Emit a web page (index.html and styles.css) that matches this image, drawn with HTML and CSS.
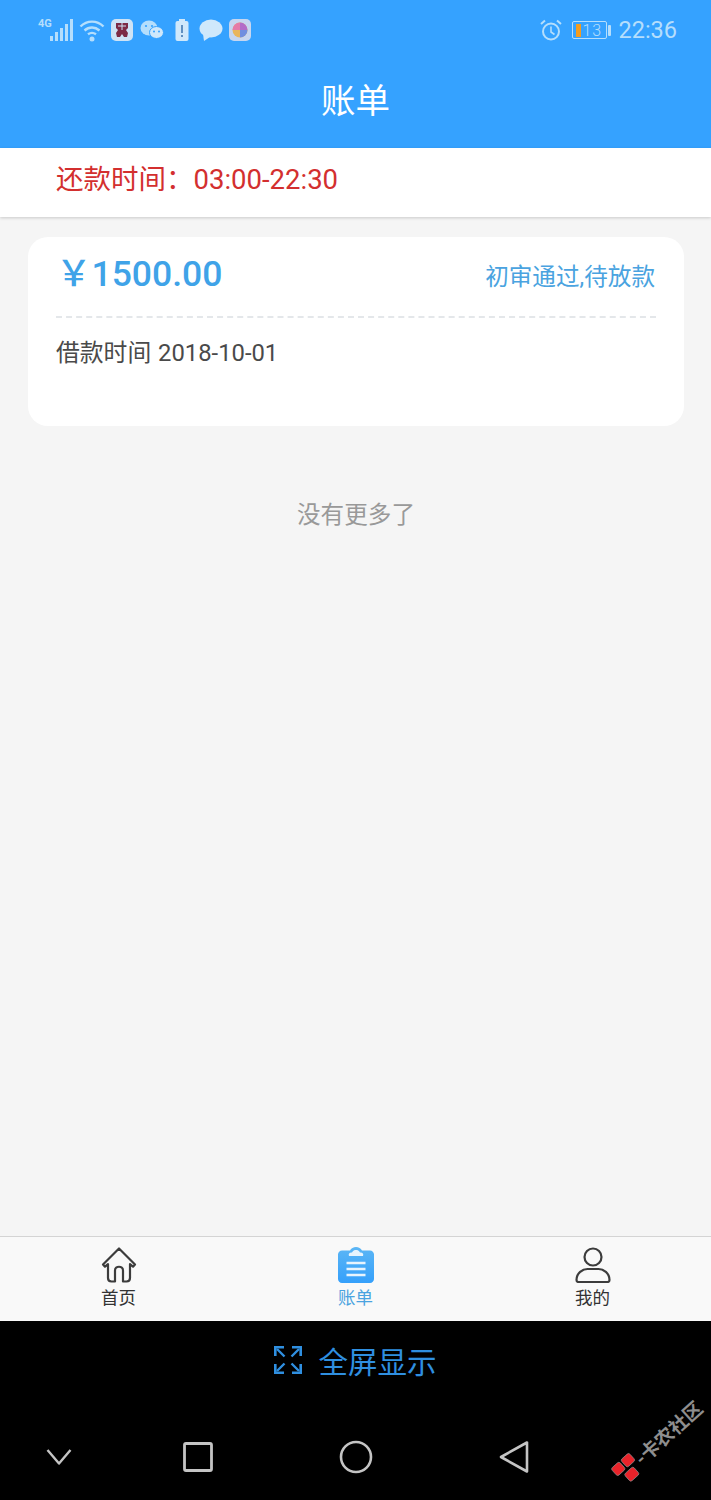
FILE: index.html
```html
<!DOCTYPE html>
<html lang="zh">
<head>
<meta charset="utf-8">
<title>账单</title>
<link rel="stylesheet" href="styles.css">
</head>
<body>
<div class="screen">
  <header class="top">
    <div class="status">
      <div class="status-left">
        <span class="net">4G</span>
        <svg class="ic-signal" viewBox="0 0 24 24" width="24" height="24"><g fill="#b5defc"><rect x="0" y="18" width="3" height="5"/><rect x="5" y="14" width="3" height="9"/><rect x="10" y="10" width="3" height="13"/><rect x="15" y="6" width="3" height="17"/><rect x="20" y="1" width="3" height="22"/></g></svg>
        <svg class="ic-wifi" viewBox="0 0 26 24" width="26" height="24"><g fill="none" stroke="#b5defc" stroke-width="2.4"><path d="M1.500 8.500C8 2 18 2 24.500 8.500"/><path d="M5.500 12.500C10 8.500 16 8.500 20.500 12.500"/><path d="M9 16.300C11.500 14.500 14.500 14.500 17 16.300"/></g><circle cx="13" cy="21" r="2.500" fill="#b5defc"/></svg>
        <svg class="ic-app" viewBox="0 0 22 22" width="22" height="22"><rect width="22" height="22" rx="5" fill="#cfe3f5"/><path d="M5 4h12v5l-2 2 2 3-1 4h-3l-2-3-2 3H6l-1-4 2-3-2-2z" fill="#7c2a45"/><path d="M7 7h8M11 4v7" stroke="#cfe3f5" stroke-width="1"/></svg>
        <svg class="ic-wechat" viewBox="0 0 24 22" width="24" height="22"><ellipse cx="9" cy="9" rx="8.500" ry="7.500" fill="#b5defc"/><ellipse cx="16.500" cy="13.500" rx="7" ry="6" fill="#cfe8fb" stroke="#35a2ff"/><circle cx="6" cy="7" r="1.100" fill="#35a2ff"/><circle cx="12" cy="7" r="1.100" fill="#35a2ff"/><circle cx="14" cy="12.500" r="1" fill="#35a2ff"/><circle cx="19" cy="12.500" r="1" fill="#35a2ff"/></svg>
        <svg class="ic-batt" viewBox="0 0 14 22" width="14" height="22"><rect x="4" y="0" width="6" height="3" fill="#cfe8fb"/><rect x="0.500" y="2" width="13" height="20" rx="2" fill="#cfe8fb"/><rect x="6" y="6" width="2" height="8" fill="#5f8fc0"/><rect x="6" y="16" width="2" height="2" fill="#5f8fc0"/></svg>
        <svg class="ic-msg" viewBox="0 0 24 22" width="24" height="22"><ellipse cx="12" cy="9.500" rx="11.500" ry="9" fill="#cfe8fb"/><path d="M4 15l1 7 6-4z" fill="#cfe8fb"/></svg>
        <svg class="ic-app2" viewBox="0 0 22 22" width="22" height="22"><rect width="22" height="22" rx="5" fill="#c6d6f0"/><circle cx="11" cy="11" r="7.500" fill="#e9b65c"/><path d="M11 3.500a7.500 7.500 0 0 1 7.500 7.500H11z" fill="#b36cc9"/><path d="M3.500 11a7.500 7.500 0 0 1 7.500-7.500V11z" fill="#e57aa8"/><path d="M11 11h7.500a7.500 7.500 0 0 1-7.500 7.500z" fill="#6f8ee0"/></svg>
      </div>
      <div class="status-right">
        <svg class="ic-alarm" viewBox="0 0 22 22" width="22" height="22"><g fill="none" stroke="#b5defc" stroke-width="2"><circle cx="11" cy="12.500" r="8"/><path d="M11 7.500v5.500l3.500 2.500" stroke-width="1.600"/><path d="M1 5l4-3.500M21 5l-4-3.500"/></g></svg>
        <div class="battery">
          <div class="batt-body"><span class="batt-fill"></span><span class="batt-num">13</span></div>
          <span class="batt-cap"></span>
        </div>
        <span class="clock">22:36</span>
      </div>
    </div>
    <h1 class="title">账单</h1>
  </header>

  <div class="notice">还款时间：03:00-22:30</div>

  <main class="content">
    <section class="card">
      <div class="card-head">
        <span class="amount"><span class="yen">￥</span>1500.00</span>
        <span class="state">初审通过,待放款</span>
      </div>
      <div class="card-body">借款时间 2018-10-01</div>
    </section>
    <p class="no-more">没有更多了</p>
  </main>

  <nav class="tabs">
    <div class="tab">
      <svg viewBox="0 0 36 36" width="36" height="36"><path d="M18 1.500L2 17.500l2 2.200 3-2.500v13.800c0 2 1 3.500 3.500 3.500H14V23.500c0-5 8-5 8 0V34.500h3.500c2.500 0 3.500-1.500 3.500-3.500V17.200l3 2.500 2-2.200z" fill="none" stroke="#3c3c3c" stroke-width="2.200" stroke-linejoin="round"/></svg>
      <span>首页</span>
    </div>
    <div class="tab active">
      <svg viewBox="0 0 36 36" width="36" height="36"><defs><linearGradient id="g" x1="0" y1="0" x2="0" y2="1"><stop offset="0" stop-color="#5cb6f5"/><stop offset="1" stop-color="#35a0fb"/></linearGradient></defs><path d="M4 3.500h8C13 1.500 15.500 0 18 0s5 1.500 6 3.500h8c2.200 0 4 1.800 4 4V32c0 2.200-1.800 4-4 4H4c-2.200 0-4-1.800-4-4V7.500c0-2.200 1.800-4 4-4z" fill="url(#g)"/><path d="M11 9c-1-2.500 1-4 3-3.500C15 3.500 16.500 3 18 3s3 .5 4 2.500c2-.5 4 1 3 3.500z" fill="#e8f4fd"/><g stroke="#e8f4fd" stroke-width="2.600"><path d="M8.500 16h19M8.500 22h19M8.500 28h19"/></g></svg>
      <span>账单</span>
    </div>
    <div class="tab">
      <svg viewBox="0 0 36 36" width="36" height="36"><g fill="none" stroke="#3c3c3c" stroke-width="2.200"><circle cx="18" cy="10" r="8.500"/><path d="M1.500 33c0-7 6-11 11-11h11c5 0 11 4 11 11 0 1.500-.5 2-2 2H3.500c-1.500 0-2-.5-2-2z"/></g></svg>
      <span>我的</span>
    </div>
  </nav>

  <footer class="system">
    <div class="fullscreen">
      <svg viewBox="0 0 28 28" width="28" height="28"><g fill="none" stroke="#2f8fe0" stroke-width="2.600"><path d="M1.300 10V1.300H10M18 1.300h8.700V10M26.700 18v8.700H18M10 26.700H1.300V18"/><path d="M3 3l7.500 7.500M25 3l-7.500 7.500M25 25l-7.500-7.500M3 25l7.500-7.500" stroke-width="2.400"/></g></svg>
      <span>全屏显示</span>
    </div>
    <div class="softkeys">
      <svg class="key-down" viewBox="0 0 26 18" width="26" height="18"><path d="M1.500 2L13 15.500 24.500 2" fill="none" stroke="#c4c4c4" stroke-width="2.400" stroke-linejoin="round"/></svg>
      <svg class="key-square" viewBox="0 0 30 30" width="30" height="30"><rect x="1.500" y="1.500" width="27" height="27" rx="1.500" fill="none" stroke="#c4c4c4" stroke-width="2.800"/></svg>
      <svg class="key-circle" viewBox="0 0 34 34" width="34" height="34"><circle cx="17" cy="17" r="15" fill="none" stroke="#c4c4c4" stroke-width="2.600"/></svg>
      <svg class="key-back" viewBox="0 0 30 34" width="30" height="34"><path d="M28 2.500v29L2 17z" fill="none" stroke="#c4c4c4" stroke-width="2.600" stroke-linejoin="round"/></svg>
    </div>
    <div class="watermark">
      <svg viewBox="0 0 26 26" width="26" height="26"><g fill="#e8232a" stroke="#8e8e8e" stroke-width=".7"><rect x="1" y="2" width="11" height="10" rx="2"/><rect x="14" y="2" width="11" height="10" rx="2"/><rect x="7" y="15" width="12" height="10" rx="2"/></g></svg>
      <span>-卡农社区</span>
    </div>
  </footer>
</div>
</body>
</html>
```
FILE: styles.css
```css
* { box-sizing: border-box; }
html, body { margin: 0; padding: 0; }
body {
  width: 711px;
  height: 1500px;
  overflow: hidden;
  font-family: Roboto, "Noto Sans CJK SC", sans-serif;
}
svg { display: block; flex: none; }
.screen {
  position: relative;
  width: 711px;
  height: 1500px;
  display: flex;
  flex-direction: column;
  background: #f5f5f5;
}
.top {
  height: 148px;
  background: #35a2ff;
  padding: 18px 34px 0 38px;
  color: #fff;
}
.status {
  height: 24px;
  display: flex;
  justify-content: space-between;
  align-items: center;
}
.status-left { display: flex; align-items: center; }
.net {
  font-size: 11px;
  font-weight: 700;
  color: #b5defc;
  width: 13px;
  align-self: flex-start;
  line-height: 12px;
}
.ic-signal { margin-left: -1px; }
.ic-wifi { margin-left: 5px; }
.ic-app { margin-left: 6px; }
.ic-wechat { margin-left: 7px; }
.ic-batt { margin-left: 11px; }
.ic-msg { margin-left: 10px; }
.ic-app2 { margin-left: 6px; }
.status-right { display: flex; align-items: center; }
.battery { display: flex; align-items: center; margin-left: 10px; }
.batt-body {
  width: 35px;
  height: 18px;
  border: 1px solid #b5defc;
  border-radius: 2px;
  display: flex;
  align-items: center;
  padding-left: 3px;
}
.batt-fill { width: 5px; height: 13px; background: #f39c1f; }
.batt-num { font-size: 16px; line-height: 15px; color: #b5defc; margin-left: 1px; font-weight: 300; letter-spacing: 1px; }
.batt-cap { width: 3px; height: 11px; margin-left: 1px; background: #b5defc; border-radius: 1px; }
.clock { font-size: 23.500px; line-height: 24px; color: #b5defc; margin-left: 7px; font-weight: 400; }
.title {
  margin: 34px -34px 0 -38px;
  text-align: center;
  font-size: 34.500px;
  line-height: 50px;
  font-weight: 400;
  color: #fff;
}
.notice {
  height: 69px;
  background: #fff;
  box-shadow: 0 1px 3px rgba(0, 0, 0, .18);
  padding-left: 56px;
  font-size: 27.500px;
  line-height: 63px;
  color: #d32f2f;
}
.content { flex: 1; padding: 20px 27px 0 28px; }
.card {
  height: 189px;
  background: #fff;
  border-radius: 20px;
  padding: 0 28px;
}
.card-head {
  height: 81px;
  display: flex;
  justify-content: space-between;
  border-bottom: 2px dashed #e4e7ea;
}
.amount {
  font-size: 35.500px;
  line-height: 75px;
  font-weight: 500;
  color: #3fa3e8;
}
.state { font-size: 23.600px; line-height: 81px; color: #4aa3e0; margin-right: 1px; }
.card-body { font-size: 23.800px; line-height: 70px; color: #4a4a4a; word-spacing: 1px; }
.no-more {
  margin: 69px 0 0;
  text-align: center;
  font-size: 23.600px;
  line-height: 40px;
  color: #999;
}
.tabs {
  height: 85px;
  background: #f9f9f9;
  border-top: 1px solid #d4d4d4;
  display: grid;
  grid-template-columns: repeat(3, 1fr);
  padding-top: 10px;
}
.tab {
  display: flex;
  flex-direction: column;
  align-items: center;
  font-size: 17.500px;
  line-height: 25px;
  color: #333;
}
.tab span { margin-top: 3px; }
.tab.active { color: #4aa3e0; }
.system {
  height: 179px;
  background: #000;
  position: relative;
}
.fullscreen {
  height: 78px;
  display: flex;
  justify-content: center;
  align-items: center;
  gap: 16px;
  color: #2f8fe0;
  font-size: 29.500px;
}
.softkeys {
  display: flex;
  align-items: center;
  height: 70px;
  margin-top: 23px;
}
.key-down { margin-left: 46px; }
.key-square { margin-left: 111px; }
.key-circle { margin-left: 126px; }
.key-back { margin-left: 126px; }
.watermark {
  position: absolute;
  left: 603px;
  top: 106px;
  width: 110px;
  display: flex;
  align-items: center;
  transform: rotate(-42deg);
  color: #8e8e8e;
  font-size: 19px;
  font-weight: 700;
  white-space: nowrap;
}
```
